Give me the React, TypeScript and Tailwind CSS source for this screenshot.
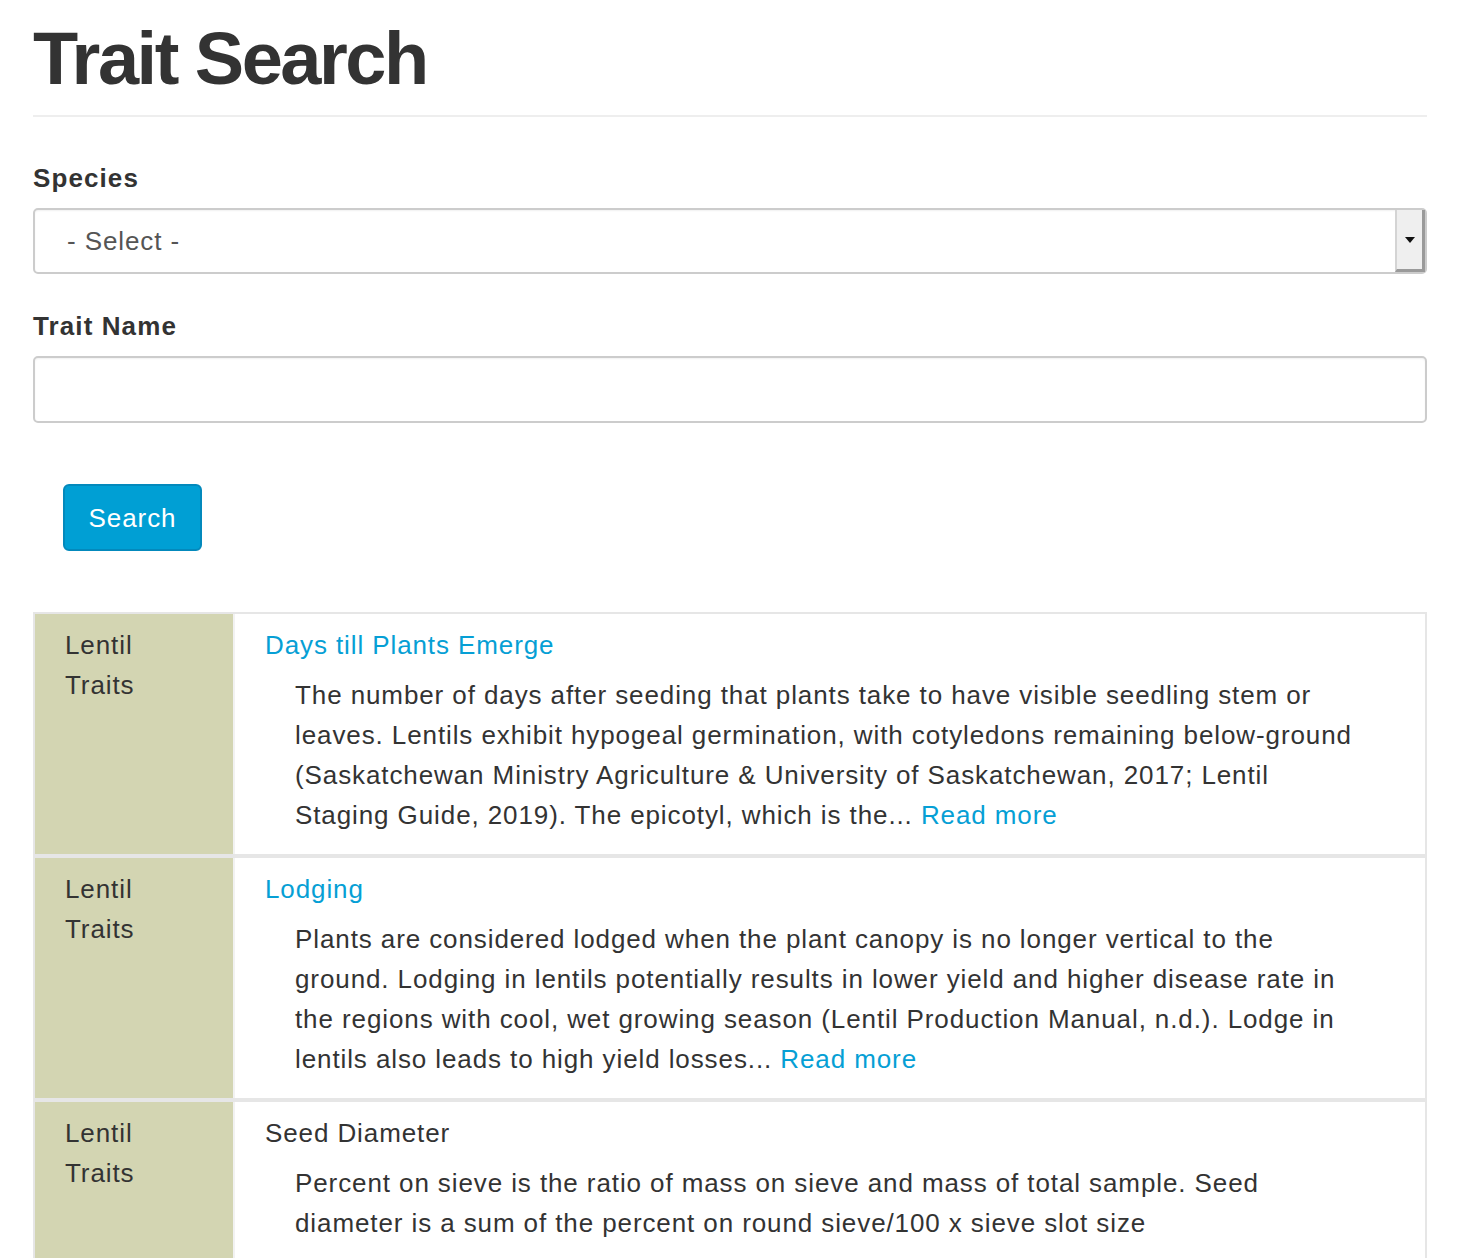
const traits = [
  {
    name: "Days till Plants Emerge",
    link: true,
    description:
      "The number of days after seeding that plants take to have visible seedling stem or leaves. Lentils exhibit hypogeal germination, with cotyledons remaining below-ground (Saskatchewan Ministry Agriculture & University of Saskatchewan, 2017; Lentil Staging Guide, 2019). The epicotyl, which is the...",
    more: true,
  },
  {
    name: "Lodging",
    link: true,
    description:
      "Plants are considered lodged when the plant canopy is no longer vertical to the ground. Lodging in lentils potentially results in lower yield and higher disease rate in the regions with cool, wet growing season (Lentil Production Manual, n.d.). Lodge in lentils also leads to high yield losses...",
    more: true,
  },
  {
    name: "Seed Diameter",
    link: false,
    description:
      "Percent on sieve is the ratio of mass on sieve and mass of total sample. Seed diameter is a sum of the percent on round sieve/100 x sieve slot size",
    more: false,
  },
];

function TraitRow({ trait, first }: { trait: (typeof traits)[number]; first: boolean }) {
  return (
    <div className={first ? "flex" : "flex border-t-4 border-[#e6e6e6]"}>
      <div className="w-[198px] shrink-0 bg-[#d3d5b2] px-[30px] pt-[11px] pb-[19px]">
        <span className="block">Lentil</span>
        <span className="block">Traits</span>
      </div>
      <div className="flex-1 border-l-2 border-[#f2f2f2] px-[30px] pt-[11px] pb-[19px]">
        {trait.link ? (
          <a href="#" className="text-[#069fd5]">
            {trait.name}
          </a>
        ) : (
          <span>{trait.name}</span>
        )}
        <p className="mt-[10px] px-[30px]">
          {trait.description}
          {trait.more && (
            <>
              {" "}
              <a href="#" className="text-[#069fd5]">
                Read more
              </a>
            </>
          )}
        </p>
      </div>
    </div>
  );
}

export default function App() {
  return (
    <div className="min-h-screen bg-white font-['Liberation_Sans',Arial,sans-serif] text-[26px] leading-[40px] tracking-[0.9px] text-[#333]">
      <div className="ml-[33px] w-[1394px] pt-[22px]">
        {/* Heading */}
        <h1 className="border-b-2 border-[#eeeeee] pb-[19px] text-[74px] font-bold leading-none tracking-[-2.5px]">
          Trait Search
        </h1>

        {/* Species */}
        <label className="mt-[41px] block font-bold tracking-[1.1px]">Species</label>
        <div className="mt-[10px] flex h-[66px] items-stretch rounded-[5px] border-2 border-[#cccccc] shadow-[inset_0_1px_2px_rgba(0,0,0,0.06)]">
          <div className="flex flex-1 items-center pl-[32px] text-[#555]">- Select -</div>
          <div className="flex w-[30px] items-center justify-center border-r-[3px] border-b-[3px] border-l-2 border-r-[#9a9a9a] border-b-[#9a9a9a] border-l-[#d4d4d4] bg-[#efefef]">
            <svg width="12" height="8" viewBox="0 0 12 8">
              <path d="M1 1h10L6 7z" fill="#111" />
            </svg>
          </div>
        </div>

        {/* Trait name */}
        <label className="mt-[32px] block font-bold tracking-[1.1px]">Trait Name</label>
        <input
          type="text"
          className="mt-[10px] block h-[67px] w-full rounded-[5px] border-2 border-[#cccccc] px-[16px] shadow-[inset_0_1px_2px_rgba(0,0,0,0.06)] outline-none"
        />

        {/* Search button */}
        <button className="mt-[61px] ml-[30px] h-[67px] w-[139px] rounded-[6px] border-2 border-[#0389bc] bg-[#009fd4] text-white">
          Search
        </button>

        {/* Results */}
        <div className="mt-[61px] border-2 border-[#e6e6e6]">
          {traits.map((t, i) => (
            <TraitRow key={t.name} trait={t} first={i === 0} />
          ))}
        </div>
      </div>
    </div>
  );
}
